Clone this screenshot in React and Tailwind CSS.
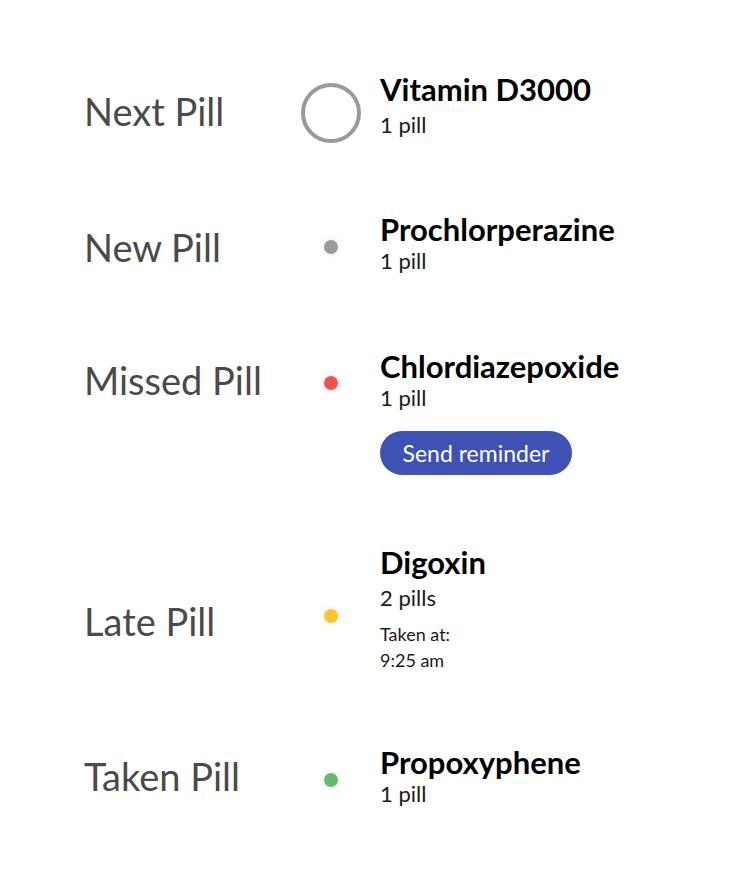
import React from "react";

const font = { fontFamily: "Lato, 'Noto Sans', sans-serif" };

function Dot({ color, mt }) {
  return (
    <div className={`flex justify-center ${mt}`}>
      <div className={`h-[14px] w-[14px] rounded-full ${color} shadow-[0_0_3px_3px_rgba(0,0,0,0.04)]`} />
    </div>
  );
}

function Title({ children }) {
  return <div className="text-[31px] font-bold leading-[28px] text-black">{children}</div>;
}

function Sub({ children, mt }) {
  return <div className={`text-[22px] leading-[22px] text-[#1a1a1a] ${mt}`}>{children}</div>;
}

function Label({ children, mt }) {
  return (
    <div className={`pl-[84px] text-[38px] font-normal leading-[37px] text-[#4a4a4a] ${mt}`}>{children}</div>
  );
}

export default function App() {
  return (
    <div className="min-h-[893px] w-[737px] bg-white pt-[75px]" style={font}>
      <div className="grid h-[140px] grid-cols-[301px_60px_1fr] items-start">
        <Label mt="mt-[18px]">Next Pill</Label>
        <div className="mt-[8px] h-[60px] w-[60px] rounded-full border-[4px] border-[#9a9a9a]" />
        <div className="pl-[19px]">
          <Title>Vitamin D3000</Title>
          <Sub mt="mt-[11px]">1 pill</Sub>
        </div>
      </div>

      <div className="grid h-[137px] grid-cols-[301px_60px_1fr] items-start">
        <Label mt="mt-[14px]">New Pill</Label>
        <Dot color="bg-[#9b9b9b]" mt="mt-[25px]" />
        <div className="pl-[19px]">
          <Title>Prochlorperazine</Title>
          <Sub mt="mt-[7px]">1 pill</Sub>
        </div>
      </div>

      <div className="grid h-[196px] grid-cols-[301px_60px_1fr] items-start">
        <Label mt="mt-[10px]">Missed Pill</Label>
        <Dot color="bg-[#ef5350]" mt="mt-[24px]" />
        <div className="pl-[19px]">
          <Title>Chlordiazepoxide</Title>
          <Sub mt="mt-[7px]">1 pill</Sub>
          <button className="mt-[22px] flex h-[44px] w-[192px] items-center justify-center rounded-full bg-[#3f51b5] text-[23px] text-white">
            Send reminder
          </button>
        </div>
      </div>

      <div className="grid h-[200px] grid-cols-[301px_60px_1fr] items-start">
        <Label mt="mt-[55px]">Late Pill</Label>
        <Dot color="bg-[#fbc52c]" mt="mt-[61px]" />
        <div className="pl-[19px]">
          <Title>Digoxin</Title>
          <Sub mt="mt-[11px]">2 pills</Sub>
          <div className="mt-[12px] text-[18px] leading-[26px] text-[#1a1a1a]">
            <div>Taken at:</div>
            <div>9:25 am</div>
          </div>
        </div>
      </div>

      <div className="grid grid-cols-[301px_60px_1fr] items-start">
        <Label mt="mt-[10px]">Taken Pill</Label>
        <Dot color="bg-[#66bb6a]" mt="mt-[25px]" />
        <div className="pl-[19px]">
          <Title>Propoxyphene</Title>
          <Sub mt="mt-[7px]">1 pill</Sub>
        </div>
      </div>
    </div>
  );
}
